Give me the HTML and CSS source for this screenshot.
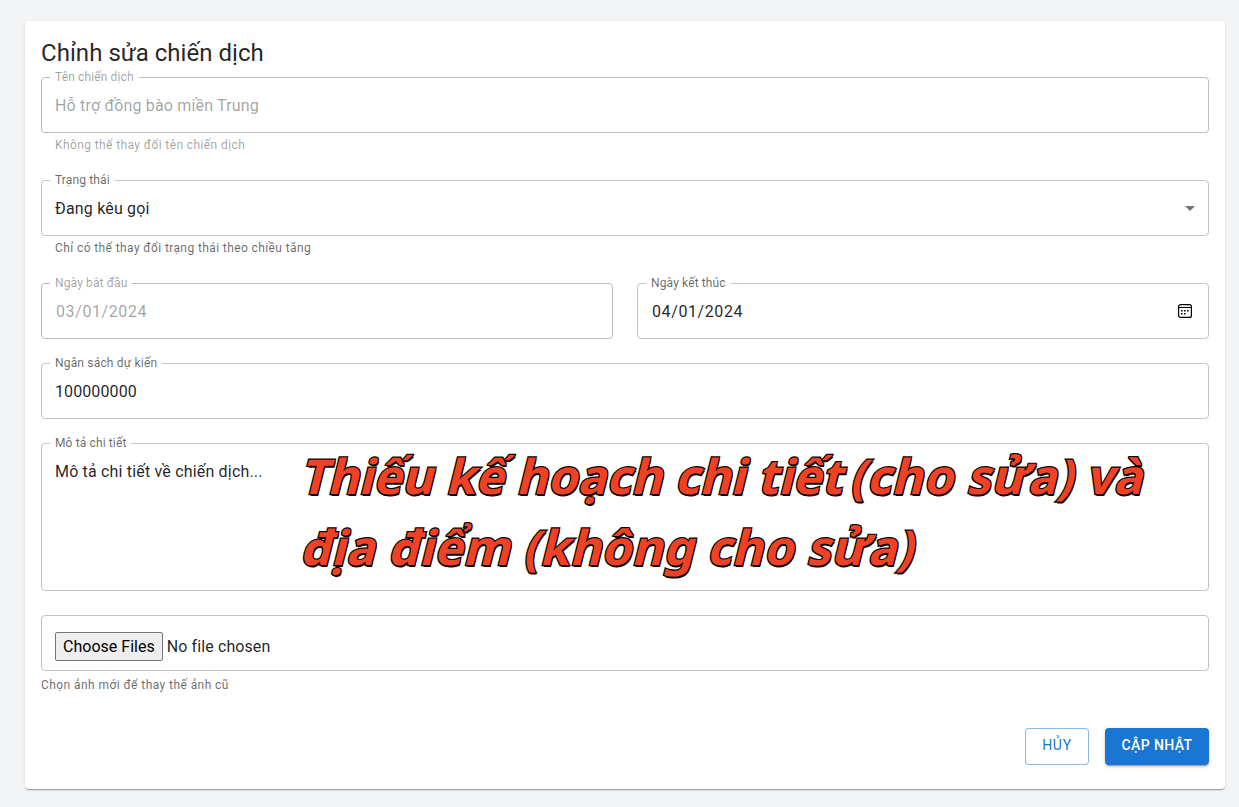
FILE: index.html
```html
<!DOCTYPE html>
<html lang="vi">
<head>
<meta charset="utf-8">
<title>Chỉnh sửa chiến dịch</title>
<link rel="stylesheet" href="styles.css">
</head>
<body>
<main class="card">
  <h1 class="title">Chỉnh sửa chiến dịch</h1>
  <form class="form">
    <div class="group">
      <div class="field disabled"><span class="label">Tên chiến dịch</span><span class="value">Hỗ trợ đồng bào miền Trung</span></div>
      <p class="helper inset disabled">Không thể thay đổi tên chiến dịch</p>
    </div>
    <div class="group">
      <div class="field"><span class="label">Trạng thái</span><span class="value">Đang kêu gọi</span>
        <svg class="arrow" width="24" height="24" viewBox="0 0 24 24"><path d="M7 10l5 5 5-5z" fill="currentColor"/></svg>
      </div>
      <p class="helper inset">Chỉ có thể thay đổi trạng thái theo chiều tăng</p>
    </div>
    <div class="row">
      <div class="field disabled"><span class="label">Ngày bắt đầu</span><span class="value date">03/01/2024</span></div>
      <div class="field"><span class="label">Ngày kết thúc</span><span class="value date">04/01/2024</span>
        <svg class="calendar" width="16" height="16" viewBox="0 0 16 16">
          <rect x="1.6" y="1.6" width="12.8" height="12.8" rx="2" fill="none" stroke="#000" stroke-width="1.2"/>
          <path d="M1.5 4.5h13" stroke="#000"/>
          <path d="M7 7h1.6v1.6H7zM4 7h1.6v1.6H4zM10 7h1.6v1.6H10zM4 10h1.6v1.6H4zM7 10h1.6v1.6H7z"/>
        </svg>
      </div>
    </div>
    <div class="field"><span class="label wide">Ngân sách dự kiến</span><span class="value number">100000000</span></div>
    <div class="field area"><span class="label">Mô tả chi tiết</span><span class="value">Mô tả chi tiết về chiến dịch...</span>
      <p class="note"><span>Thiếu kế hoạch chi tiết <b>(cho sửa)</b> và</span><span class="second">địa điểm (không cho sửa)</span></p>
    </div>
    <div class="group">
      <div class="field file"><button type="button" class="choose">Choose Files</button><span class="value">No file chosen</span></div>
      <p class="helper below">Chọn ảnh mới để thay thế ảnh cũ</p>
    </div>
  </form>
  <div class="actions">
    <button class="btn outlined">Hủy</button>
    <button class="btn contained">Cập nhật</button>
  </div>
</main>
</body>
</html>
```

FILE: styles.css
```css
* { box-sizing: border-box; }
body {
  margin: 0;
  padding: 21px 14px 18px 25px;
  height: 807px;
  overflow: hidden;
  background: #f3f4f6;
  color: rgba(0, 0, 0, .87);
  font-family: Roboto, "Liberation Sans", sans-serif;
}
.card {
  height: 768px;
  padding: 16px;
  background: #fff;
  border-radius: 4px;
  box-shadow: 0 2px 1px -1px rgba(0,0,0,.2), 0 1px 1px 0 rgba(0,0,0,.14), 0 1px 3px 0 rgba(0,0,0,.12);
}
.title { margin: 0 0 8px; font-size: 24px; font-weight: 400; line-height: 32px; letter-spacing: .03px; }
.form { display: flex; flex-direction: column; gap: 24px; }
.row { display: grid; grid-template-columns: 1fr 1fr; gap: 24px; }
.field {
  position: relative;
  display: flex;
  align-items: center;
  height: 56px;
  padding: 0 13px;
  border: 1px solid #c4c4c4;
  border-radius: 4px;
}
.field.disabled { border-color: #bdbdbd; }
.label {
  position: absolute;
  top: -9px;
  left: 8px;
  padding: 0 5px;
  background: #fff;
  color: rgba(0, 0, 0, .6);
  font-size: 12px;
  line-height: 17px;
  letter-spacing: .13px;
}
.label.wide { letter-spacing: .18px; }
.value { font-size: 16px; line-height: 23px; letter-spacing: .18px; }
.value.number { letter-spacing: .1px; }
.date { padding-left: 1px; letter-spacing: .6px; }
.disabled .label, .disabled .value, .helper.disabled { color: rgba(0, 0, 0, .38); }
.helper {
  margin: 2px 0 1px;
  color: rgba(0, 0, 0, .6);
  font-size: 12px;
  line-height: 20px;
  letter-spacing: .4px;
}
.helper.inset { margin-left: 14px; }
.helper.below { margin: 4px 0 -1px; letter-spacing: .43px; }
.arrow { margin: 0 -7px 0 auto; color: rgba(0, 0, 0, .54); }
.calendar { margin: 0 2px 0 auto; }
.area { height: 148px; align-items: flex-start; padding-top: 16px; }
.note {
  position: absolute;
  left: 262px;
  top: -4px;
  margin: 0;
  color: #ef4126;
  font: 700 48px/71px "Noto Sans", "Open Sans", sans-serif;
  white-space: nowrap;
  -webkit-text-stroke: 2.4px #000;
  paint-order: stroke fill;
  text-shadow: 1.5px 2px 0 #000;
}
.note span { display: block; width: max-content; transform: skewX(-14deg); }
.note b { margin-left: -5px; font-weight: inherit; letter-spacing: .4px; }
.note .second { letter-spacing: .36px; }
.file { padding-top: 6px; gap: 4px; }
.file .value { letter-spacing: .1px; }
.choose {
  height: 29px;
  padding: 0 7px;
  border: 1px solid #767676;
  border-radius: 2px;
  background: #efefef;
  color: #000;
  font: 400 16px/23px Roboto, sans-serif;
  letter-spacing: .02px;
}
.actions { display: flex; justify-content: flex-end; gap: 16px; margin-top: 34px; }
.btn {
  height: 37px;
  border: 0;
  border-radius: 4px;
  padding: 0 0 3px;
  font: 500 14px/24px Roboto, sans-serif;
  letter-spacing: .4px;
  text-transform: uppercase;
}
.outlined { width: 64px; border: 1px solid rgba(25, 118, 210, .5); background: #fff; color: #1976d2; font-weight: 400; letter-spacing: .75px; }
.contained {
  width: 104px;
  background: #1976d2;
  color: #fff;
  box-shadow: 0 3px 1px -2px rgba(0,0,0,.2), 0 2px 2px 0 rgba(0,0,0,.14), 0 1px 5px 0 rgba(0,0,0,.12);
}
```
